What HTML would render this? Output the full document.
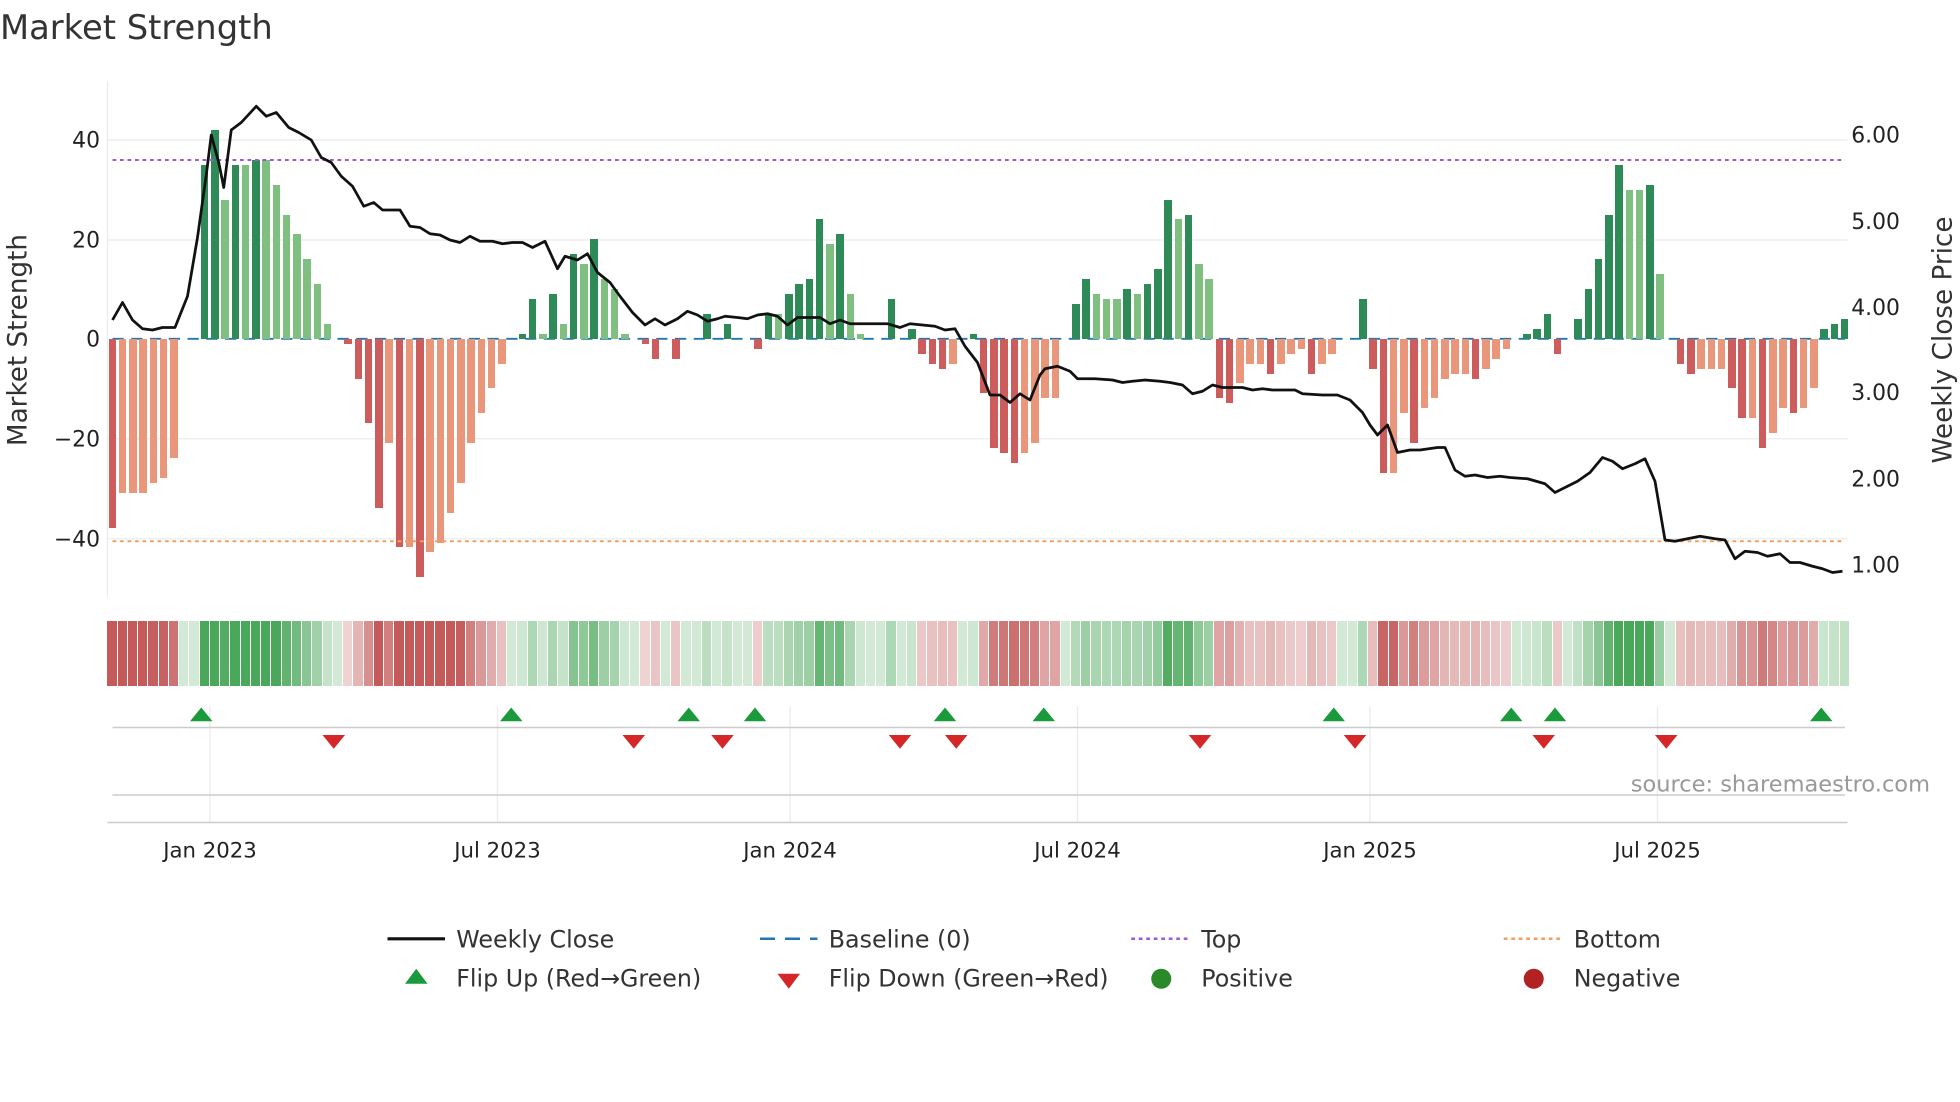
<!DOCTYPE html>
<html><head><meta charset="utf-8">
<style>
html,body{margin:0;padding:0;background:#fff;}
body{position:relative;width:1960px;height:1102px;overflow:hidden;}
svg{display:block;position:absolute;left:0;top:0;font-family:"DejaVu Sans","Liberation Sans",sans-serif;}
#bars{position:absolute;left:107.4px;top:338.75px;width:1742.7px;height:0;display:flex;}
#bars i{position:relative;flex:1 1 0;height:0;display:block;}
#bars i::before{content:"";position:absolute;left:1.35px;width:7.5px;height:calc(var(--v,0)*4.97px);}
#bars i::after{content:"";position:absolute;left:0;right:1px;top:282.5px;height:65px;opacity:calc(0.25 + var(--v,0)/40);}
#bars i.G::before,#bars i.g::before{bottom:0;}
#bars i.R::before,#bars i.r::before{top:0;}
#bars i.G::before{background:#2e8b57;}
#bars i.g::before{background:#7fbf7f;}
#bars i.R::before{background:#cd5c5c;}
#bars i.r::before{background:#e9967a;}
#bars i.G::after,#bars i.g::after,#bars i.z::after{background:#4aa85a;}
#bars i.R::after,#bars i.r::after{background:#c45a5a;}
</style></head>
<body>
<svg width="1960" height="1102" viewBox="0 0 1568 881.6" xmlns="http://www.w3.org/2000/svg">
<rect width="1568" height="882" fill="#fff"/>
<text x="0" y="31" font-size="27" fill="#333">Market Strength</text>
<g stroke="#ebebeb" stroke-width="1">
<line x1="86" y1="112" x2="1478" y2="112"/><line x1="86" y1="192" x2="1478" y2="192"/>
<line x1="86" y1="351" x2="1478" y2="351"/><line x1="86" y1="431" x2="1478" y2="431"/>
<line x1="86" y1="65" x2="86" y2="478"/>
<line x1="168" y1="565" x2="168" y2="658"/><line x1="398" y1="565" x2="398" y2="658"/>
<line x1="632" y1="565" x2="632" y2="658"/><line x1="862" y1="565" x2="862" y2="658"/>
<line x1="1096" y1="565" x2="1096" y2="658"/><line x1="1326" y1="565" x2="1326" y2="658"/>
</g>
<g font-size="17.5" fill="#222" text-anchor="end">
<text x="80" y="118">40</text><text x="80" y="198">20</text><text x="80" y="277">0</text>
<text x="80" y="357">−20</text><text x="80" y="437">−40</text>
</g>
<g font-size="17.5" fill="#222">
<text x="1481" y="114">6.00</text><text x="1481" y="183">5.00</text><text x="1481" y="252">4.00</text>
<text x="1481" y="320">3.00</text><text x="1481" y="389">2.00</text><text x="1481" y="458">1.00</text>
</g>
<text transform="translate(21,272) rotate(-90)" font-size="21" fill="#333" text-anchor="middle">Market Strength</text>
<text transform="translate(1561,272) rotate(-90)" font-size="21" fill="#333" text-anchor="middle">Weekly Close Price</text>
<line x1="90" y1="271" x2="1476" y2="271" stroke="#1f77b4" stroke-width="1.5" stroke-dasharray="9,6"/>
<line x1="90" y1="582" x2="1476" y2="582" stroke="#ccc" stroke-width="1.2"/>
<line x1="90" y1="636" x2="1476" y2="636" stroke="#ccc" stroke-width="1.2"/>
<line x1="86" y1="658" x2="1478" y2="658" stroke="#ccc" stroke-width="1.2"/>
<text x="1544" y="633" font-size="18" fill="#999" text-anchor="end">source: sharemaestro.com</text>
<g font-size="17" fill="#222" text-anchor="middle">
<text x="168" y="686">Jan 2023</text><text x="398" y="686">Jul 2023</text><text x="632" y="686">Jan 2024</text>
<text x="862" y="686">Jul 2024</text><text x="1096" y="686">Jan 2025</text><text x="1326" y="686">Jul 2025</text>
</g>
<g font-size="19" fill="#333">
<line x1="310" y1="751" x2="356" y2="751" stroke="#111" stroke-width="2.5"/>
<text x="365" y="758">Weekly Close</text>
<line x1="608" y1="751" x2="654" y2="751" stroke="#1f77b4" stroke-width="2" stroke-dasharray="12,8"/>
<text x="663" y="758">Baseline (0)</text>
<line x1="905" y1="751" x2="951" y2="751" stroke="#9b59d6" stroke-width="2" stroke-dasharray="3,3"/>
<text x="961" y="758">Top</text>
<line x1="1203" y1="751" x2="1249" y2="751" stroke="#f0a060" stroke-width="2" stroke-dasharray="3,3"/>
<text x="1259" y="758">Bottom</text>
<polygon points="333,775 324,787 342,787" fill="#1a9a3a"/>
<text x="365" y="789">Flip Up (Red→Green)</text>
<polygon points="622,779 640,779 631,791" fill="#d62728"/>
<text x="663" y="789">Flip Down (Green→Red)</text>
<circle cx="929" cy="783" r="8" fill="#2a8a2a"/>
<text x="961" y="789">Positive</text>
<circle cx="1227" cy="783" r="8" fill="#b22222"/>
<text x="1259" y="789">Negative</text>
</g>
</svg>
<div id="bars">
<i class="R" style="--v:38"></i><i class="r" style="--v:31"></i><i class="r" style="--v:31"></i><i class="r" style="--v:31"></i><i class="r" style="--v:29"></i><i class="r" style="--v:28"></i><i class="r" style="--v:24"></i><i class="z"></i><i class="z"></i><i class="G" style="--v:35"></i>
<i class="G" style="--v:42"></i><i class="g" style="--v:28"></i><i class="G" style="--v:35"></i><i class="g" style="--v:35"></i><i class="G" style="--v:36"></i><i class="g" style="--v:36"></i><i class="g" style="--v:31"></i><i class="g" style="--v:25"></i><i class="g" style="--v:21"></i><i class="g" style="--v:16"></i>
<i class="g" style="--v:11"></i><i class="g" style="--v:3"></i><i class="z"></i><i class="R" style="--v:1"></i><i class="R" style="--v:8"></i><i class="R" style="--v:17"></i><i class="R" style="--v:34"></i><i class="r" style="--v:21"></i><i class="R" style="--v:42"></i><i class="r" style="--v:42"></i>
<i class="R" style="--v:48"></i><i class="r" style="--v:43"></i><i class="r" style="--v:41"></i><i class="r" style="--v:35"></i><i class="r" style="--v:29"></i><i class="r" style="--v:21"></i><i class="r" style="--v:15"></i><i class="r" style="--v:10"></i><i class="r" style="--v:5"></i><i class="z"></i>
<i class="G" style="--v:1"></i><i class="G" style="--v:8"></i><i class="g" style="--v:1"></i><i class="G" style="--v:9"></i><i class="g" style="--v:3"></i><i class="G" style="--v:17"></i><i class="g" style="--v:15"></i><i class="G" style="--v:20"></i><i class="g" style="--v:12"></i><i class="g" style="--v:10"></i>
<i class="g" style="--v:1"></i><i class="z"></i><i class="R" style="--v:1"></i><i class="R" style="--v:4"></i><i class="z"></i><i class="R" style="--v:4"></i><i class="z"></i><i class="z"></i><i class="G" style="--v:5"></i><i class="z"></i>
<i class="G" style="--v:3"></i><i class="z"></i><i class="z"></i><i class="R" style="--v:2"></i><i class="G" style="--v:5"></i><i class="g" style="--v:5"></i><i class="G" style="--v:9"></i><i class="G" style="--v:11"></i><i class="G" style="--v:12"></i><i class="G" style="--v:24"></i>
<i class="g" style="--v:19"></i><i class="G" style="--v:21"></i><i class="g" style="--v:9"></i><i class="g" style="--v:1"></i><i class="z"></i><i class="z"></i><i class="G" style="--v:8"></i><i class="z"></i><i class="G" style="--v:2"></i><i class="R" style="--v:3"></i>
<i class="R" style="--v:5"></i><i class="R" style="--v:6"></i><i class="r" style="--v:5"></i><i class="z"></i><i class="G" style="--v:1"></i><i class="R" style="--v:11"></i><i class="R" style="--v:22"></i><i class="R" style="--v:23"></i><i class="R" style="--v:25"></i><i class="r" style="--v:23"></i>
<i class="r" style="--v:21"></i><i class="r" style="--v:12"></i><i class="r" style="--v:12"></i><i class="z"></i><i class="G" style="--v:7"></i><i class="G" style="--v:12"></i><i class="g" style="--v:9"></i><i class="g" style="--v:8"></i><i class="g" style="--v:8"></i><i class="G" style="--v:10"></i>
<i class="g" style="--v:9"></i><i class="G" style="--v:11"></i><i class="G" style="--v:14"></i><i class="G" style="--v:28"></i><i class="g" style="--v:24"></i><i class="G" style="--v:25"></i><i class="g" style="--v:15"></i><i class="g" style="--v:12"></i><i class="R" style="--v:12"></i><i class="R" style="--v:13"></i>
<i class="r" style="--v:9"></i><i class="r" style="--v:5"></i><i class="r" style="--v:5"></i><i class="R" style="--v:7"></i><i class="r" style="--v:5"></i><i class="r" style="--v:3"></i><i class="r" style="--v:2"></i><i class="R" style="--v:7"></i><i class="r" style="--v:5"></i><i class="r" style="--v:3"></i>
<i class="z"></i><i class="z"></i><i class="G" style="--v:8"></i><i class="R" style="--v:6"></i><i class="R" style="--v:27"></i><i class="r" style="--v:27"></i><i class="r" style="--v:15"></i><i class="R" style="--v:21"></i><i class="r" style="--v:14"></i><i class="r" style="--v:12"></i>
<i class="r" style="--v:8"></i><i class="r" style="--v:7"></i><i class="r" style="--v:7"></i><i class="R" style="--v:8"></i><i class="r" style="--v:6"></i><i class="r" style="--v:4"></i><i class="r" style="--v:2"></i><i class="z"></i><i class="G" style="--v:1"></i><i class="G" style="--v:2"></i>
<i class="G" style="--v:5"></i><i class="R" style="--v:3"></i><i class="z"></i><i class="G" style="--v:4"></i><i class="G" style="--v:10"></i><i class="G" style="--v:16"></i><i class="G" style="--v:25"></i><i class="G" style="--v:35"></i><i class="g" style="--v:30"></i><i class="g" style="--v:30"></i>
<i class="G" style="--v:31"></i><i class="g" style="--v:13"></i><i class="z"></i><i class="R" style="--v:5"></i><i class="R" style="--v:7"></i><i class="r" style="--v:6"></i><i class="r" style="--v:6"></i><i class="r" style="--v:6"></i><i class="R" style="--v:10"></i><i class="R" style="--v:16"></i>
<i class="r" style="--v:16"></i><i class="R" style="--v:22"></i><i class="r" style="--v:19"></i><i class="r" style="--v:14"></i><i class="R" style="--v:15"></i><i class="r" style="--v:14"></i><i class="r" style="--v:10"></i><i class="G" style="--v:2"></i><i class="G" style="--v:3"></i><i class="G" style="--v:4"></i>
</div>
<svg width="1960" height="1102" viewBox="0 0 1568 881.6" xmlns="http://www.w3.org/2000/svg" style="pointer-events:none">
<line x1="90" y1="128" x2="1476" y2="128" stroke="#9b59d6" stroke-width="1.6" stroke-dasharray="3,3"/>
<line x1="90" y1="433" x2="1476" y2="433" stroke="#f0a060" stroke-width="1.6" stroke-dasharray="3,3"/>
<polyline fill="none" stroke="#111" stroke-width="2.2" stroke-linejoin="round" points="90,256 98,242 106,256 114,263 122,264 130,262 140,262 150,237 158,190 165,140 169,108 175,130 179,150 185,104 193,98 205,85 213,93 221,90 231,102 239,106 249,112 257,126 265,130 273,141 282,149 291,165 299,162 306,168 320,168 328,181 336,182 344,187 352,188 360,192 368,194 376,189 384,193 394,193 402,195 410,194 418,194 426,198 436,193 446,215 452,205 462,208 470,203 478,218 488,226 496,237 506,250 516,260 524,255 532,260 542,255 550,249 558,252 566,257 574,255 580,253 590,254 598,255 606,252 614,251 622,253 630,260 638,254 648,254 656,254 664,259 672,256 680,259 690,259 700,259 710,259 720,262 728,259 738,260 748,261 756,264 764,263 772,277 782,290 792,316 800,316 808,322 816,315 824,320 832,300 836,295 846,293 856,297 862,303 876,303 890,304 898,306 906,305 916,304 928,305 936,306 946,308 954,315 962,313 970,308 978,310 986,310 994,310 1002,312 1010,311 1018,312 1026,312 1036,312 1042,315 1058,316 1070,316 1080,320 1090,330 1096,340 1102,348 1110,340 1118,362 1128,360 1136,360 1150,358 1156,358 1164,376 1172,381 1180,380 1190,382 1200,381 1208,382 1222,383 1236,387 1244,394 1254,389 1262,385 1272,378 1282,366 1290,369 1298,375 1308,371 1316,367 1324,385 1332,432 1340,433 1350,431 1360,429 1372,431 1380,432 1388,447 1396,441 1406,442 1414,445 1424,443 1432,450 1440,450 1450,453 1458,455 1466,458 1474,457"/>
<g fill="#1a9a3a">
<polygon points="161,566 152,577 170,577"/><polygon points="409,566 400,577 418,577"/><polygon points="551,566 542,577 560,577"/><polygon points="604,566 595,577 613,577"/><polygon points="756,566 747,577 765,577"/><polygon points="835,566 826,577 844,577"/><polygon points="1067,566 1058,577 1076,577"/><polygon points="1209,566 1200,577 1218,577"/><polygon points="1244,566 1235,577 1253,577"/><polygon points="1457,566 1448,577 1466,577"/>
</g>
<g fill="#d62728">
<polygon points="258,588 276,588 267,599"/><polygon points="498,588 516,588 507,599"/><polygon points="569,588 587,588 578,599"/><polygon points="711,588 729,588 720,599"/><polygon points="756,588 774,588 765,599"/><polygon points="951,588 969,588 960,599"/><polygon points="1075,588 1093,588 1084,599"/><polygon points="1226,588 1244,588 1235,599"/><polygon points="1324,588 1342,588 1333,599"/>
</g>
</svg>
</body></html>
